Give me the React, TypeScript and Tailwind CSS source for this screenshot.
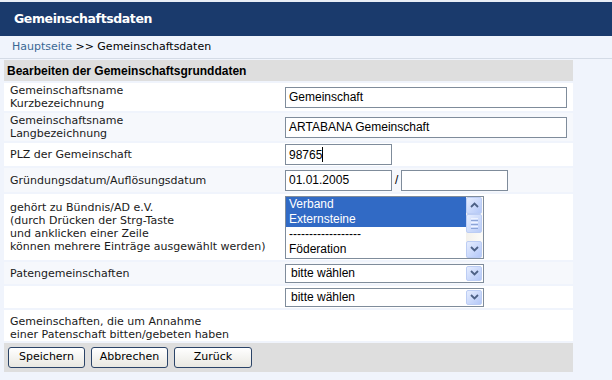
import React from "react";

const lbl = "font-['DejaVu_Sans',sans-serif] text-[11px] leading-[13px] text-[#1a1a1a]";
const arial = "font-['Liberation_Sans',Arial,sans-serif] text-[12px] text-black";

function XPBtn({ dir, h }: { dir: "up" | "down"; h: number }) {
  return (
    <div
      className="w-[16px] shrink-0 rounded-[2px] border border-[#bccdf4] bg-linear-to-br from-[#e6edfe] to-[#b4c8f8] flex items-center justify-center"
      style={{ height: h }}
    >
      <svg width="9" height="6" viewBox="0 0 9 6">
        <path
          d={dir === "up" ? "M1 5 L4.5 1.5 L8 5" : "M1 1 L4.5 4.5 L8 1"}
          fill="none"
          stroke="#4d6185"
          strokeWidth="1.8"
        />
      </svg>
    </div>
  );
}

function Input({ w, value, cursor }: { w: number; value?: string; cursor?: boolean }) {
  return (
    <div
      className={`h-[21px] border border-[#7f8c9b] bg-white flex items-center pl-[3px] ${arial}`}
      style={{ width: w }}
    >
      <span>{value}</span>
      {cursor && <span className="inline-block w-[1px] h-[15px] bg-black" />}
    </div>
  );
}

function Select({ value }: { value: string }) {
  return (
    <div className={`h-[19px] w-[199px] border border-[#7f8c9b] bg-white flex items-center justify-between pl-[5px] pr-[1px] ${arial}`}>
      <span>{value}</span>
      <XPBtn dir="down" h={15} />
    </div>
  );
}

function Row({
  h,
  bg,
  label,
  children,
  labelClass = "",
}: {
  h: number;
  bg: string;
  label?: React.ReactNode;
  children?: React.ReactNode;
  labelClass?: string;
}) {
  return (
    <div className={`flex items-center ${bg}`} style={{ height: h }}>
      <div className={`w-[278px] pl-[6px] ${lbl} ${labelClass}`}>{label}</div>
      <div className="flex-1 pl-[3px] flex items-center">{children}</div>
    </div>
  );
}

function Btn({ children, w }: { children: React.ReactNode; w: number }) {
  return (
    <div
      className="h-[21px] rounded-[3px] border border-[#2b4468] bg-linear-to-b from-white to-[#e9e8e2] flex items-center justify-center font-['DejaVu_Sans',sans-serif] text-[11px] text-black"
      style={{ width: w }}
    >
      {children}
    </div>
  );
}

export default function App() {
  return (
    <div className="w-[612px] h-[380px] bg-[#f0f4fc] overflow-hidden">
      <div className="h-[2px] bg-[#e9eef6]" />
      <div className="h-[34px] bg-[#1a3a6c] flex items-center pl-[14px] font-['DejaVu_Sans',sans-serif] font-bold text-[12.5px] tracking-[-0.4px] text-white">
        Gemeinschaftsdaten
      </div>
      <div className="h-[23px] border-b border-[#d4dbe6] flex items-center pl-[12px] font-['DejaVu_Sans',sans-serif] text-[11px] text-black">
        <span className="text-[#3a6894]">Hauptseite</span>
        <span>&nbsp;&gt;&gt; Gemeinschaftsdaten</span>
      </div>
      <div className="ml-[4px] mt-[1px] w-[569px] flex flex-col gap-[2px]">
        <div className="h-[21px] bg-[#dedede] flex items-center pl-[3px] font-['Liberation_Sans',Arial,sans-serif] font-bold text-[12px] text-black">
          Bearbeiten der Gemeinschaftsgrunddaten
        </div>
        <Row
          h={28}
          bg="bg-white"
          label={
            <>
              Gemeinschaftsname
              <br />
              Kurzbezeichnung
            </>
          }
        >
          <Input w={282} value="Gemeinschaft" />
        </Row>
        <Row
          h={28}
          bg="bg-[#f6f8fc]"
          label={
            <>
              Gemeinschaftsname
              <br />
              Langbezeichnung
            </>
          }
        >
          <Input w={282} value="ARTABANA Gemeinschaft" />
        </Row>
        <Row h={23} bg="bg-white" label="PLZ der Gemeinschaft">
          <Input w={107} value="98765" cursor />
        </Row>
        <Row h={24} bg="bg-[#f6f8fc]" label="Gründungsdatum/Auflösungsdatum">
          <Input w={107} value="01.01.2005" />
          <span className={`mx-[3px] ${arial}`}>/</span>
          <Input w={107} />
        </Row>
        <Row
          h={66}
          bg="bg-white"
          label={
            <>
              gehört zu Bündnis/AD e.V.
              <br />
              (durch Drücken der Strg-Taste
              <br />
              und anklicken einer Zeile
              <br />
              können mehrere Einträge ausgewählt werden)
            </>
          }
        >
          <div className="w-[199px] h-[63px] border border-[#7f8c9b] bg-white flex">
            <div className={`flex-1 flex flex-col ${arial}`}>
              <div className="h-[15px] leading-[15px] pl-[3px] bg-[#316ac5] text-white">Verband</div>
              <div className="h-[15px] leading-[15px] pl-[3px] bg-[#316ac5] text-white">Externsteine</div>
              <div className="h-[15px] leading-[15px] pl-[3px]">------------------</div>
              <div className="h-[15px] leading-[15px] pl-[3px]">Föderation</div>
            </div>
            <div className="w-[17px] flex flex-col bg-linear-to-r from-[#f3f1ec] to-[#fdfcf9]">
              <XPBtn dir="up" h={17} />
              <div className="h-[19px] w-[16px] rounded-[2px] border border-[#bccdf4] bg-linear-to-br from-[#e6edfe] to-[#b9ccf8] flex flex-col items-center justify-center gap-[1px]">
                <div className="w-[7px] h-[1px] bg-[#eef3ff]" />
                <div className="w-[7px] h-[1px] bg-[#8ca4d6]" />
                <div className="w-[7px] h-[1px] bg-[#eef3ff]" />
                <div className="w-[7px] h-[1px] bg-[#8ca4d6]" />
                <div className="w-[7px] h-[1px] bg-[#eef3ff]" />
                <div className="w-[7px] h-[1px] bg-[#8ca4d6]" />
              </div>
              <div className="flex-1" />
              <XPBtn dir="down" h={17} />
            </div>
          </div>
        </Row>
        <Row h={22} bg="bg-[#f6f8fc]" label="Patengemeinschaften">
          <Select value="bitte wählen" />
        </Row>
        <Row h={22} bg="bg-white">
          <Select value="bitte wählen" />
        </Row>
        <Row
          h={31}
          bg="bg-white"
          labelClass="pt-[5px]"
          label={
            <>
              Gemeinschaften, die um Annahme
              <br />
              einer Patenschaft bitten/gebeten haben
            </>
          }
        />
        <div className="h-[29px] bg-[#dedede] flex items-center pl-[4px] gap-[6px]">
          <Btn w={77}>Speichern</Btn>
          <Btn w={77}>Abbrechen</Btn>
          <Btn w={78}>Zurück</Btn>
        </div>
      </div>
    </div>
  );
}
